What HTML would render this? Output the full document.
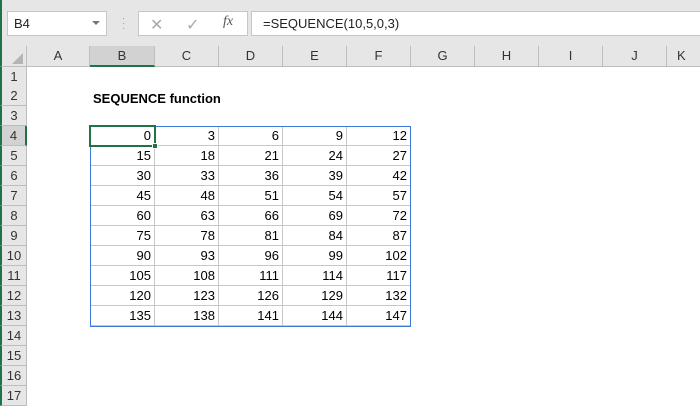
<!DOCTYPE html>
<html><head><style>
*{margin:0;padding:0;box-sizing:border-box}
body{width:700px;height:400px;overflow:hidden;background:#fff;font-family:"Liberation Sans",sans-serif;position:relative}
.a{position:absolute}
.top{left:0;top:0;width:700px;height:46px;background:#e6e6e6;border-left:2px solid #217346}
.box{background:#fff;border:1px solid #c6c6c6}
.ch{top:46px;height:21px;background:#e6e6e6;border-right:1px solid #bdbdbd;border-bottom:1px solid #bdbdbd;font-size:13px;color:#333;text-align:center;line-height:20px}
.rh{left:0;width:27px;height:20px;background:#e6e6e6;border-bottom:1px solid #bdbdbd;border-right:1px solid #bdbdbd;border-left:2px solid #217346;font-size:13px;color:#333;text-align:center;line-height:20px}
.c{height:20px;border-right:1px solid #c8c8c8;border-bottom:1px solid #c8c8c8;font-size:13px;text-align:right;padding-right:3px;line-height:20px;color:#000}
</style></head><body>
<div class="a top"></div>
<div class="a box" style="left:7px;top:11px;width:100px;height:25px;font-size:13px;line-height:23px;padding-left:6px;color:#222">B4</div>
<div class="a" style="left:92px;top:21px;width:0;height:0;border-left:4px solid transparent;border-right:4px solid transparent;border-top:4px solid #777"></div>
<div class="a" style="left:122px;top:16px;color:#999;font-size:10px;line-height:5px">·<br>·<br>·</div>
<div class="a box" style="left:138px;top:11px;width:110px;height:25px"></div>
<div class="a" style="left:150px;top:15px;color:#aaa;font-size:16px">✕</div>
<div class="a" style="left:186px;top:15px;color:#aaa;font-size:16px">✓</div>
<div class="a" style="left:223px;top:14px;color:#555;font-size:14px;font-style:italic;font-family:'Liberation Serif',serif">fx</div>
<div class="a box" style="left:251px;top:11px;width:460px;height:25px;font-size:13px;line-height:23px;padding-left:11px;color:#222">=SEQUENCE(10,5,0,3)</div>
<div class="a ch" style="left:0;width:27px;border-left:2px solid #217346"></div>
<div class="a" style="left:12px;top:53px;width:0;height:0;border-left:11px solid transparent;border-bottom:11px solid #b4b4b4"></div>
<div class="a ch" style="left:27px;width:63px">A</div>
<div class="a ch" style="left:90px;width:65px;background:#d2d2d2;border-bottom:2px solid #217346">B</div>
<div class="a ch" style="left:155px;width:64px">C</div>
<div class="a ch" style="left:219px;width:64px">D</div>
<div class="a ch" style="left:283px;width:64px">E</div>
<div class="a ch" style="left:347px;width:64px">F</div>
<div class="a ch" style="left:411px;width:64px">G</div>
<div class="a ch" style="left:475px;width:64px">H</div>
<div class="a ch" style="left:539px;width:64px">I</div>
<div class="a ch" style="left:603px;width:64px">J</div>
<div class="a ch" style="left:667px;width:64px;text-align:left;padding-left:10px">K</div>
<div class="a rh" style="top:67px">1</div>
<div class="a rh" style="top:86px">2</div>
<div class="a rh" style="top:106px">3</div>
<div class="a rh" style="top:126px;background:#d2d2d2;border-right:2px solid #217346">4</div>
<div class="a rh" style="top:146px">5</div>
<div class="a rh" style="top:166px">6</div>
<div class="a rh" style="top:186px">7</div>
<div class="a rh" style="top:206px">8</div>
<div class="a rh" style="top:226px">9</div>
<div class="a rh" style="top:246px">10</div>
<div class="a rh" style="top:266px">11</div>
<div class="a rh" style="top:286px">12</div>
<div class="a rh" style="top:306px">13</div>
<div class="a rh" style="top:326px">14</div>
<div class="a rh" style="top:346px">15</div>
<div class="a rh" style="top:366px">16</div>
<div class="a rh" style="top:386px">17</div>
<div class="a" style="left:93px;top:89px;font-size:13px;font-weight:bold;line-height:20px">SEQUENCE function</div>
<div class="a" style="left:90px;top:126px;width:321px;height:201px;border:1px solid #3c78d8;z-index:2;pointer-events:none"></div>
<div class="a" id="t" style="left:90px;top:126px;width:321px">
<script>
var h='';for(var r=0;r<10;r++){for(var c=0;c<5;c++){h+='<div class="a c" style="left:'+(c*64+(c?1:0))+'px;top:'+(r*20)+'px;width:'+(c?64:65)+'px">'+(r*15+c*3)+'</div>';}}
document.getElementById('t').innerHTML=h;
</script>
</div>
<div class="a" style="left:89px;top:125px;width:67px;height:22px;border:2px solid #217346;z-index:3"></div>
<div class="a" style="left:152px;top:143px;width:6px;height:6px;background:#217346;border:1px solid #fff;z-index:4"></div>
</body></html>
